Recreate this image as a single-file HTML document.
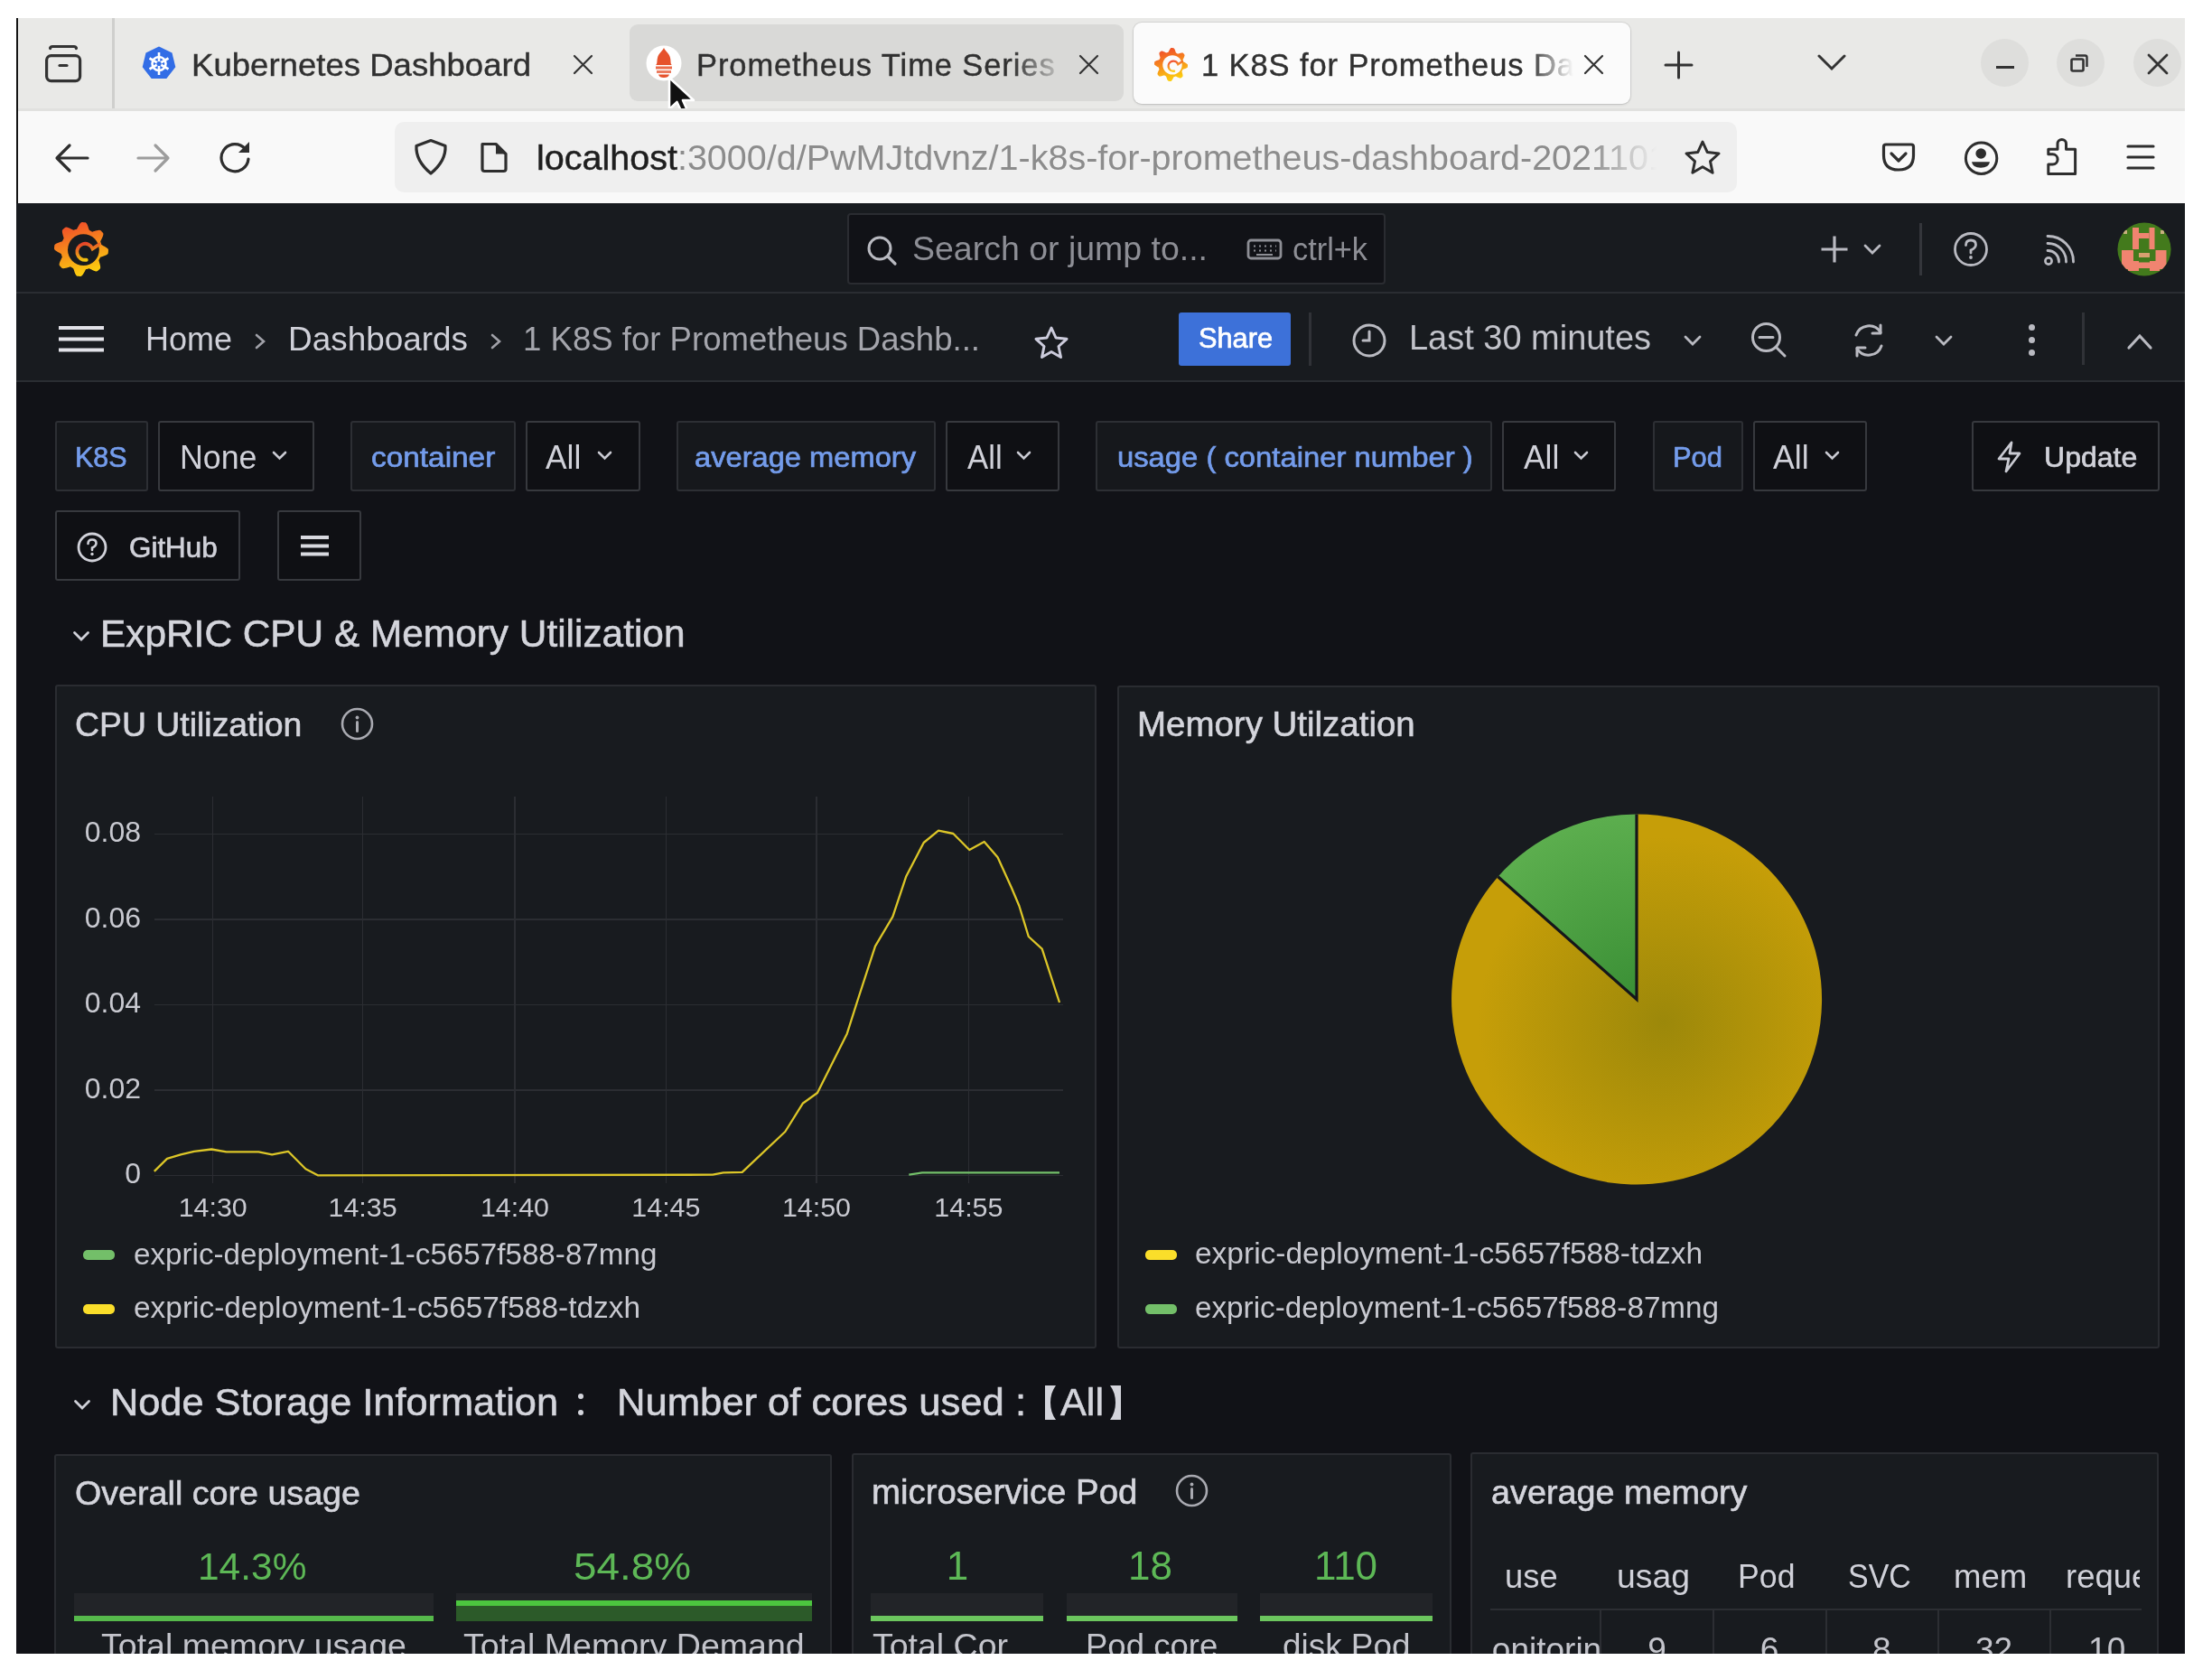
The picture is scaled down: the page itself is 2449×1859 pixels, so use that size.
<!DOCTYPE html><html><head><meta charset="utf-8">
<style>
*{box-sizing:border-box;margin:0;padding:0}
html,body{width:2449px;height:1859px;overflow:hidden;background:#fff;font-family:"Liberation Sans",sans-serif}
.a{position:absolute}
.t{position:absolute;white-space:nowrap;line-height:1;transform-origin:0 0}
#win{position:absolute;left:18px;top:20px;width:2401px;height:1811px;overflow:hidden;background:#111217}
#pg{position:absolute;left:-18px;top:-20px;width:2449px;height:1859px;filter:blur(0.6px)}
svg{position:absolute;overflow:visible}
</style></head><body>
<div id="win"><div id="pg">
<div class="a" style="left:0px;top:0px;width:2449px;height:125px;background:#e9e9e7;"></div>
<svg style="left:48px;top:48px" width="44" height="44" viewBox="0 0 44 44"><g fill="none" stroke="#333" stroke-width="3.2" stroke-linecap="round"><path d="M7.5 5.5 Q8 3.5 10 3.5 H34 Q36 3.5 36.5 5.5"></path><rect x="3.6" y="13.6" width="37" height="28" rx="5"></rect><path d="M18 24.5 H26"></path></g></svg>
<div class="a" style="left:124px;top:20px;width:3px;height:105px;background:#cfcfcd;"></div>
<svg style="left:156px;top:50px" width="40" height="40" viewBox="0 0 40 40"><polygon points="20,1.5 34.5,8.6 38.3,24.3 28.3,36.9 11.7,36.9 1.7,24.3 5.5,8.6" fill="#326de6"></polygon><g stroke="#fff" stroke-width="2.6" fill="none"><circle cx="20" cy="20.5" r="7.5"></circle><path d="M20 8V33 M9.5 14.5 30.5 26.5 M9.5 26.5 30.5 14.5"></path></g><circle cx="20" cy="20.5" r="2.6" fill="#326de6"></circle></svg>
<div class="t" style="left: 211.5px; top: 55.3px; font-size: 34.5px; color: rgb(48, 48, 48); font-weight: 400; -webkit-text-stroke: 0.4px rgb(48, 48, 48); transform: scaleX(1.0597);">Kubernetes Dashboard</div>
<svg style="left:636.0px;top:62.0px" width="19" height="19" viewBox="0 0 19 19"><path d="M0 0L19 19M19 0L0 19" stroke="#333" stroke-width="2.2" stroke-linecap="round"></path></svg>
<div class="a" style="left:697px;top:27px;width:547px;height:85px;background:#d9d9d7;border-radius:9px"></div>
<svg style="left:715px;top:50px" width="40" height="40" viewBox="0 0 40 40"><circle cx="20" cy="20" r="19.5" fill="#fff"></circle><path d="M20 3 C22 7 26 9 27 14 C28 18 27 21 29 22 H11 C13 21 12 18 13 14 C14 9 18 7 20 3Z" fill="#e6522c"></path><rect x="11" y="23.5" width="18" height="3" fill="#e6522c" opacity=".85"></rect><rect x="12" y="28" width="16" height="3" fill="#e6522c" opacity=".75"></rect><path d="M14 32.5 H26 Q25 36 20 36 Q15 36 14 32.5Z" fill="#e6522c"></path></svg>
<div class="t" style="left:771px;top:55.3px;font-size:34.5px;color:#303030;-webkit-text-stroke:0.4px #303030;letter-spacing:0.9px;width:410px;overflow:hidden;-webkit-mask-image:linear-gradient(90deg,#000 85%,transparent 100%)">Prometheus Time Series</div>
<svg style="left:1195.5px;top:62.0px" width="19" height="19" viewBox="0 0 19 19"><path d="M0 0L19 19M19 0L0 19" stroke="#333" stroke-width="2.2" stroke-linecap="round"></path></svg>
<div class="a" style="left:1255px;top:25px;width:550px;height:90px;background:#fbfbfb;border-radius:9px;box-shadow:0 0 0 1px rgba(0,0,0,.07),0 1px 3px rgba(0,0,0,.12)"></div>
<div class="t" style="left:1330px;top:55.3px;font-size:34.5px;color:#303030;-webkit-text-stroke:0.4px #303030;letter-spacing:0.9px;width:412px;overflow:hidden;-webkit-mask-image:linear-gradient(90deg,#000 88%,transparent 100%)">1 K8S for Prometheus Dashboard</div>
<svg style="left:1755.0px;top:61.5px" width="19" height="19" viewBox="0 0 19 19"><path d="M0 0L19 19M19 0L0 19" stroke="#333" stroke-width="2.2" stroke-linecap="round"></path></svg>
<svg style="left:1843px;top:57px" width="31" height="30" viewBox="0 0 31 30"><path d="M15.5 1V29M1 15H30" stroke="#333" stroke-width="3" stroke-linecap="round"></path></svg>
<svg style="left:2012px;top:59px" width="32" height="20" viewBox="0 0 32 20"><path d="M2 3L16 17L30 3" fill="none" stroke="#333" stroke-width="3" stroke-linecap="round"></path></svg>
<div class="a" style="left:2193.0px;top:43px;width:53px;height:53px;border-radius:50%;background:#dededc"></div>
<div class="a" style="left:2277.0px;top:43px;width:53px;height:53px;border-radius:50%;background:#dededc"></div>
<div class="a" style="left:2361.5px;top:43px;width:53px;height:53px;border-radius:50%;background:#dededc"></div>
<div class="a" style="left:2209.5px;top:73px;width:20.0px;height:3px;background:#333;"></div>
<svg style="left:2292px;top:60px" width="20" height="20" viewBox="0 0 20 20"><rect x="1.5" y="5.5" width="13" height="13" rx="1.5" fill="none" stroke="#333" stroke-width="2.6"></rect><path d="M6 1.5H16.5Q18.5 1.5 18.5 3.5V14" fill="none" stroke="#333" stroke-width="2.4"></path></svg>
<svg style="left:2378.5px;top:60.5px" width="20" height="20" viewBox="0 0 20 20"><path d="M0 0L20 20M20 0L0 20" stroke="#333" stroke-width="2.8" stroke-linecap="round"></path></svg>
<svg style="left:738px;top:84px" width="34" height="44" viewBox="0 0 34 44"><path d="M3 2V37L11.5 29L17.5 42L23.5 39.5L18 27H30Z" fill="#111" stroke="#fff" stroke-width="2.6" stroke-linejoin="round"></path></svg>
<div class="a" style="left:0px;top:123px;width:2449px;height:102px;background:#f9f9f9;"></div>
<div class="a" style="left:0px;top:120px;width:2449px;height:3px;background:#e1e1df;"></div>
<svg style="left:60px;top:158px" width="40" height="34" viewBox="0 0 40 34"><path d="M37 17H4M17 3L3 17L17 31" fill="none" stroke="#2e2e2e" stroke-width="3.2" stroke-linecap="round" stroke-linejoin="round"></path></svg>
<svg style="left:150px;top:158px" width="40" height="34" viewBox="0 0 40 34"><path d="M3 17H36M22 3L36 17L22 31" fill="none" stroke="#9d9d9d" stroke-width="3.2" stroke-linecap="round" stroke-linejoin="round"></path></svg>
<svg style="left:240px;top:154px" width="40" height="40" viewBox="0 0 40 40"><path d="M31.5 11 A15 15 0 1 0 35 22" fill="none" stroke="#2e2e2e" stroke-width="3.2" stroke-linecap="round"></path><path d="M36 3V15H24Z" fill="#2e2e2e"></path></svg>
<div class="a" style="left:437px;top:134.5px;width:1486px;height:78.5px;background:#efefef;border-radius:10px"></div>
<svg style="left:457px;top:153px" width="40" height="42" viewBox="0 0 40 42"><path d="M20 2.5 L36 8.5 Q37 25 20 39 Q3 25 4 8.5 Z" fill="none" stroke="#2e2e2e" stroke-width="3.2" stroke-linejoin="round"></path></svg>
<svg style="left:530px;top:156px" width="34" height="37" viewBox="0 0 34 37"><path d="M4 3.5H19L30 14.5V31Q30 33.5 27.5 33.5H6.5Q4 33.5 4 31Z" fill="none" stroke="#2e2e2e" stroke-width="3.2" stroke-linejoin="round"></path><path d="M19 3.5V14.5H30Z" fill="#2e2e2e"></path></svg>
<div class="t" style="left:594px;top:154.9px;font-size:39.5px;color:#8c8c8c;width:1240px;overflow:hidden;-webkit-mask-image:linear-gradient(90deg,#000 94%,transparent 100%)"><span style="color:#1e1e1e;-webkit-text-stroke:0.5px #1e1e1e">localhost</span>:3000/d/PwMJtdvnz/1-k8s-for-prometheus-dashboard-20211010</div>
<svg style="left:1864px;top:154px" width="42" height="42" viewBox="0 0 42 42"><path d="M21 3L26.3 14.6L39 16L29.5 24.6L32.1 37.2L21 30.8L9.9 37.2L12.5 24.6L3 16L15.7 14.6Z" fill="none" stroke="#2e2e2e" stroke-width="3" stroke-linejoin="round"></path></svg>
<svg style="left:2083px;top:157px" width="38" height="34" viewBox="0 0 38 34"><path d="M5 3H33Q35.5 3 35.5 5.5V15Q35.5 31 19 31Q2.5 31 2.5 15V5.5Q2.5 3 5 3Z" fill="none" stroke="#2e2e2e" stroke-width="3.2"></path><path d="M11 13L19 21L27 13" fill="none" stroke="#2e2e2e" stroke-width="3.2" stroke-linecap="round" stroke-linejoin="round"></path></svg>
<svg style="left:2173px;top:154px" width="42" height="42" viewBox="0 0 42 42"><circle cx="20.6" cy="21.2" r="17.2" fill="none" stroke="#2e2e2e" stroke-width="3"></circle><circle cx="20.2" cy="16" r="5.8" fill="#2e2e2e"></circle><path d="M10 25.2H30Q29 31.7 20 31.7Q11 31.7 10 25.2Z" fill="#2e2e2e"></path></svg>
<svg style="left:2263px;top:152px" width="40" height="44" viewBox="0 0 40 44"><path d="M4.8 40.5H34.6V13.3H24.5V7.2A4.75 4.75 0 0 0 15 7.2V13.3H4.8V18.8H9.5A5.6 5.6 0 0 1 9.5 30H4.8Z" fill="none" stroke="#2e2e2e" stroke-width="3" stroke-linejoin="round"></path></svg>
<svg style="left:2354px;top:159px" width="32" height="30" viewBox="0 0 32 30"><path d="M2 3H30M2 15H30M2 27H30" stroke="#2e2e2e" stroke-width="3.2" stroke-linecap="round"></path></svg>
<svg style="left:1278px;top:53px" width="37" height="37" viewBox="0 0 37 37"><defs><linearGradient id="gl1" x1="0.2" y1="0" x2="0.5" y2="1"><stop offset="0" stop-color="#f0462a"></stop><stop offset="1" stop-color="#fcd10e"></stop></linearGradient></defs><path d="M18.50 0.09 L19.08 0.01 L19.66 0.04 L20.24 0.08 L20.82 0.15 L21.39 0.23 L21.91 0.63 L22.35 1.29 L22.72 2.04 L23.05 2.85 L23.32 3.66 L23.57 4.42 L23.80 5.12 L24.08 5.60 L24.49 5.78 L24.88 5.97 L25.27 6.18 L25.66 6.40 L26.07 6.57 L26.73 6.40 L27.46 6.17 L28.25 5.93 L29.09 5.70 L29.93 5.54 L30.75 5.45 L31.51 5.49 L31.99 5.84 L32.38 6.27 L32.75 6.71 L33.12 7.16 L33.47 7.63 L33.55 8.27 L33.39 9.05 L33.12 9.85 L32.78 10.65 L32.41 11.41 L32.04 12.13 L31.71 12.78 L31.57 13.32 L31.73 13.74 L31.87 14.16 L32.00 14.58 L32.12 15.00 L32.29 15.42 L32.87 15.76 L33.55 16.12 L34.29 16.51 L35.03 16.94 L35.75 17.41 L36.39 17.94 L36.91 18.50 L36.99 19.08 L36.96 19.66 L36.92 20.24 L36.85 20.82 L36.77 21.39 L36.37 21.91 L35.71 22.35 L34.96 22.72 L34.15 23.05 L33.34 23.32 L32.58 23.57 L31.88 23.80 L31.40 24.08 L31.22 24.49 L31.03 24.88 L30.82 25.27 L30.60 25.66 L30.43 26.07 L30.60 26.73 L30.83 27.46 L31.07 28.25 L31.30 29.09 L31.46 29.93 L31.55 30.75 L31.51 31.51 L31.16 31.99 L30.73 32.38 L30.29 32.75 L29.84 33.12 L29.37 33.47 L28.73 33.55 L27.95 33.39 L27.15 33.12 L26.35 32.78 L25.59 32.41 L24.87 32.04 L24.22 31.71 L23.68 31.57 L23.26 31.73 L22.84 31.87 L22.42 32.00 L22.00 32.12 L21.58 32.29 L21.24 32.87 L20.88 33.55 L20.49 34.29 L20.06 35.03 L19.59 35.75 L19.06 36.39 L18.50 36.91 L17.92 36.99 L17.34 36.96 L16.76 36.92 L16.18 36.85 L15.61 36.77 L15.09 36.37 L14.65 35.71 L14.28 34.96 L13.95 34.15 L13.68 33.34 L13.43 32.58 L13.20 31.88 L12.92 31.40 L12.51 31.22 L12.12 31.03 L11.73 30.82 L11.34 30.60 L10.93 30.43 L10.27 30.60 L9.54 30.83 L8.75 31.07 L7.91 31.30 L7.07 31.46 L6.25 31.55 L5.49 31.51 L5.01 31.16 L4.62 30.73 L4.25 30.29 L3.88 29.84 L3.53 29.37 L3.45 28.73 L3.61 27.95 L3.88 27.15 L4.22 26.35 L4.59 25.59 L4.96 24.87 L5.29 24.22 L5.43 23.68 L5.27 23.26 L5.13 22.84 L5.00 22.42 L4.88 22.00 L4.71 21.58 L4.13 21.24 L3.45 20.88 L2.71 20.49 L1.97 20.06 L1.25 19.59 L0.61 19.06 L0.09 18.50 L0.01 17.92 L0.04 17.34 L0.08 16.76 L0.15 16.18 L0.23 15.61 L0.63 15.09 L1.29 14.65 L2.04 14.28 L2.85 13.95 L3.66 13.68 L4.42 13.43 L5.12 13.20 L5.60 12.92 L5.78 12.51 L5.97 12.12 L6.18 11.73 L6.40 11.34 L6.57 10.93 L6.40 10.27 L6.17 9.54 L5.93 8.75 L5.70 7.91 L5.54 7.07 L5.45 6.25 L5.49 5.49 L5.84 5.01 L6.27 4.62 L6.71 4.25 L7.16 3.88 L7.63 3.53 L8.27 3.45 L9.05 3.61 L9.85 3.88 L10.65 4.22 L11.41 4.59 L12.13 4.96 L12.78 5.29 L13.32 5.43 L13.74 5.27 L14.16 5.13 L14.58 5.00 L15.00 4.88 L15.42 4.71 L15.76 4.13 L16.12 3.45 L16.51 2.71 L16.94 1.97 L17.41 1.25 L17.94 0.61Z" fill="url(#gl1)"></path><circle cx="19.98" cy="18.87" r="10.73" fill="#fbfbfb"></circle><path d="M22.02 25.71 A5.55 5.55 0 1 1 26.27 18.13 L30.71 15.17" fill="none" stroke="url(#gl1)" stroke-width="2.41" stroke-linecap="round" opacity="0.95"></path></svg>
<div class="a" style="left:18px;top:20px;width:2px;height:205px;background:#141414;"></div>
<div class="a" style="left:0px;top:225px;width:2449px;height:99px;background:#181b1f;"></div>
<div class="a" style="left:0px;top:322.5px;width:2449px;height:2.0px;background:#2a2d32;"></div>
<svg style="left:60px;top:246px" width="60" height="60" viewBox="0 0 60 60"><defs><linearGradient id="gl2" x1="0.2" y1="0" x2="0.5" y2="1"><stop offset="0" stop-color="#f0462a"></stop><stop offset="1" stop-color="#fcd10e"></stop></linearGradient></defs><path d="M30.00 0.15 L30.94 0.01 L31.88 0.06 L32.82 0.13 L33.76 0.24 L34.69 0.37 L35.53 1.02 L36.24 2.09 L36.85 3.32 L37.37 4.62 L37.82 5.93 L38.22 7.17 L38.59 8.30 L39.05 9.08 L39.71 9.37 L40.35 9.69 L40.98 10.02 L41.61 10.38 L42.28 10.65 L43.34 10.37 L44.53 10.01 L45.82 9.61 L47.17 9.25 L48.53 8.98 L49.87 8.85 L51.11 8.89 L51.87 9.46 L52.50 10.16 L53.12 10.88 L53.70 11.61 L54.27 12.37 L54.40 13.42 L54.14 14.68 L53.71 15.98 L53.16 17.27 L52.55 18.51 L51.95 19.67 L51.42 20.73 L51.20 21.61 L51.45 22.28 L51.68 22.95 L51.89 23.64 L52.08 24.33 L52.36 25.00 L53.31 25.55 L54.41 26.13 L55.60 26.77 L56.81 27.47 L57.97 28.24 L59.01 29.09 L59.85 30.00 L59.99 30.94 L59.94 31.88 L59.87 32.82 L59.76 33.76 L59.63 34.69 L58.98 35.53 L57.91 36.24 L56.68 36.85 L55.38 37.37 L54.07 37.82 L52.83 38.22 L51.70 38.59 L50.92 39.05 L50.63 39.71 L50.31 40.35 L49.98 40.98 L49.62 41.61 L49.35 42.28 L49.63 43.34 L49.99 44.53 L50.39 45.82 L50.75 47.17 L51.02 48.53 L51.15 49.87 L51.11 51.11 L50.54 51.87 L49.84 52.50 L49.12 53.12 L48.39 53.70 L47.63 54.27 L46.58 54.40 L45.32 54.14 L44.02 53.71 L42.73 53.16 L41.49 52.55 L40.33 51.95 L39.27 51.42 L38.39 51.20 L37.72 51.45 L37.05 51.68 L36.36 51.89 L35.67 52.08 L35.00 52.36 L34.45 53.31 L33.87 54.41 L33.23 55.60 L32.53 56.81 L31.76 57.97 L30.91 59.01 L30.00 59.85 L29.06 59.99 L28.12 59.94 L27.18 59.87 L26.24 59.76 L25.31 59.63 L24.47 58.98 L23.76 57.91 L23.15 56.68 L22.63 55.38 L22.18 54.07 L21.78 52.83 L21.41 51.70 L20.95 50.92 L20.29 50.63 L19.65 50.31 L19.02 49.98 L18.39 49.62 L17.72 49.35 L16.66 49.63 L15.47 49.99 L14.18 50.39 L12.83 50.75 L11.47 51.02 L10.13 51.15 L8.89 51.11 L8.13 50.54 L7.50 49.84 L6.88 49.12 L6.30 48.39 L5.73 47.63 L5.60 46.58 L5.86 45.32 L6.29 44.02 L6.84 42.73 L7.45 41.49 L8.05 40.33 L8.58 39.27 L8.80 38.39 L8.55 37.72 L8.32 37.05 L8.11 36.36 L7.92 35.67 L7.64 35.00 L6.69 34.45 L5.59 33.87 L4.40 33.23 L3.19 32.53 L2.03 31.76 L0.99 30.91 L0.15 30.00 L0.01 29.06 L0.06 28.12 L0.13 27.18 L0.24 26.24 L0.37 25.31 L1.02 24.47 L2.09 23.76 L3.32 23.15 L4.62 22.63 L5.93 22.18 L7.17 21.78 L8.30 21.41 L9.08 20.95 L9.37 20.29 L9.69 19.65 L10.02 19.02 L10.38 18.39 L10.65 17.72 L10.37 16.66 L10.01 15.47 L9.61 14.18 L9.25 12.83 L8.98 11.47 L8.85 10.13 L8.89 8.89 L9.46 8.13 L10.16 7.50 L10.88 6.88 L11.61 6.30 L12.37 5.73 L13.42 5.60 L14.68 5.86 L15.98 6.29 L17.27 6.84 L18.51 7.45 L19.67 8.05 L20.73 8.58 L21.61 8.80 L22.28 8.55 L22.95 8.32 L23.64 8.11 L24.33 7.92 L25.00 7.64 L25.55 6.69 L26.13 5.59 L26.77 4.40 L27.47 3.19 L28.24 2.03 L29.09 0.99Z" fill="url(#gl2)"></path><circle cx="32.40" cy="30.60" r="17.40" fill="#181b1f"></circle><path d="M35.70 41.70 A9.00 9.00 0 1 1 42.60 29.40 L49.80 24.60" fill="none" stroke="url(#gl2)" stroke-width="3.90" stroke-linecap="round" opacity="0.95"></path></svg>
<div class="a" style="left:938px;top:236px;width:596px;height:79px;background:#111217;border:2px solid #2a2c31;border-radius:4px"></div>
<svg style="left:958px;top:259px" width="38" height="38" viewBox="0 0 38 38"><circle cx="16" cy="16" r="12" fill="none" stroke="#b9bac1" stroke-width="3"></circle><path d="M25 25L33 33" stroke="#b9bac1" stroke-width="3.2" stroke-linecap="round"></path></svg>
<div class="t" style="left: 1010px; top: 256.76px; font-size: 37.5px; color: rgb(141, 142, 149); font-weight: 400; transform: scaleX(0.9993);">Search or jump to...</div>
<svg style="left:1380px;top:264px" width="40" height="24" viewBox="0 0 40 24"><rect x="2" y="2" width="36" height="20" rx="3" fill="none" stroke="#8d8e95" stroke-width="2.8"></rect><path d="M8 8.5H10M14 8.5H16M20 8.5H22M26 8.5H28M32 8.5H33M8 13.5H10M14 13.5H16M20 13.5H22M26 13.5H28M32 13.5H33M11 18H29" stroke="#8d8e95" stroke-width="2.2"></path></svg>
<div class="t" style="left: 1431px; top: 258.97px; font-size: 34.3px; color: rgb(141, 142, 149); font-weight: 400; transform: scaleX(1.0011);">ctrl+k</div>
<svg style="left:2015px;top:260px" width="32" height="32" viewBox="0 0 32 32"><path d="M16 1.5V30.5M1.5 16H30.5" stroke="#b9bac1" stroke-width="3.2"></path></svg>
<svg style="left:2063px;top:270px" width="20" height="12" viewBox="0 0 20 12"><path d="M2 2L10 10L18 2" fill="none" stroke="#b9bac1" stroke-width="2.8" stroke-linecap="round"></path></svg>
<div class="a" style="left:2124.5px;top:247px;width:3.0px;height:58px;background:#34363b;"></div>
<svg style="left:2162px;top:256px" width="40" height="40" viewBox="0 0 40 40"><circle cx="20" cy="20" r="17.5" fill="none" stroke="#b9bac1" stroke-width="2.8"></circle><path d="M14.5 15.5Q14.5 10 20 10Q25.5 10 25.5 15Q25.5 18.5 20 21V24" fill="none" stroke="#b9bac1" stroke-width="2.8" stroke-linecap="round"></path><circle cx="20" cy="29" r="1.9" fill="#b9bac1"></circle></svg>
<svg style="left:2262px;top:260px" width="38" height="38" viewBox="0 0 38 38"><circle cx="6" cy="29" r="3.6" fill="none" stroke="#b9bac1" stroke-width="2.6"></circle><path d="M5 17.5A12 12 0 0 1 17.5 30M5 9.5A20 20 0 0 1 25.5 30M5 1.5A28 28 0 0 1 33.5 30" fill="none" stroke="#b9bac1" stroke-width="2.8" stroke-linecap="round"></path></svg>
<svg style="left:2344px;top:246px" width="60" height="60" viewBox="0 0 60 60"><defs><clipPath id="av"><circle cx="30" cy="30" r="29.6"></circle></clipPath></defs><g clip-path="url(#av)"><rect width="60" height="60" fill="#437a1c"></rect><g fill="#f08470"><rect x="17" y="6" width="7" height="24"></rect><rect x="35.5" y="6" width="6" height="24"></rect><rect x="24" y="12" width="11.5" height="6"></rect><rect x="5" y="31" width="13" height="21"></rect><rect x="42.5" y="31" width="12" height="21"></rect><rect x="12" y="43" width="12" height="11"></rect><rect x="36" y="43" width="11" height="11"></rect><rect x="24" y="34" width="12" height="5" fill="#d9a070"></rect><rect x="24" y="44.5" width="12" height="6.5"></rect></g><rect x="7" y="9" width="4" height="4" fill="#c8b080"></rect><rect x="48" y="9" width="4" height="4" fill="#c8b080"></rect></g></svg>
<div class="a" style="left:0px;top:324.5px;width:2449px;height:97.5px;background:#181b1f;"></div>
<div class="a" style="left:0px;top:421px;width:2449px;height:2px;background:#2a2d32;"></div>
<svg style="left:64px;top:361px" width="52" height="30" viewBox="0 0 52 30"><path d="M1 2H51M1 14.5H51M1 26.5H51" stroke="#e2e2e8" stroke-width="3.8"></path></svg>
<div class="t" style="left: 161px; top: 356.68px; font-size: 37px; color: rgb(207, 208, 216); font-weight: 400; transform: scaleX(0.9726);">Home</div>
<svg style="left:281px;top:368px" width="14" height="20" viewBox="0 0 14 20"><path d="M3 3L11 10L3 17" fill="none" stroke="#a0a1a8" stroke-width="2.6" stroke-linecap="round"></path></svg>
<div class="t" style="left: 319px; top: 356.68px; font-size: 37px; color: rgb(207, 208, 216); font-weight: 400; transform: scaleX(0.9974);">Dashboards</div>
<svg style="left:542px;top:368px" width="14" height="20" viewBox="0 0 14 20"><path d="M3 3L11 10L3 17" fill="none" stroke="#a0a1a8" stroke-width="2.6" stroke-linecap="round"></path></svg>
<div class="t" style="left: 579px; top: 356.68px; font-size: 37px; color: rgb(164, 165, 172); font-weight: 400; transform: scaleX(0.9881);">1 K8S for Prometheus Dashb...</div>
<svg style="left:1144px;top:360px" width="40" height="40" viewBox="0 0 40 40"><path d="M20 3L25 14L37 15.3L28 23.5L30.5 35.5L20 29.5L9.5 35.5L12 23.5L3 15.3L15 14Z" fill="none" stroke="#ccccdc" stroke-width="3" stroke-linejoin="round"></path></svg>
<div class="a" style="left:1305px;top:346px;width:124px;height:59px;background:#3d71d9;border-radius:3px"></div>
<div class="t" style="left: 1327px; top: 359.51px; font-size: 30.7px; color: rgb(255, 255, 255); font-weight: 400; -webkit-text-stroke-width: 0.7px; transform: scaleX(1.0013);">Share</div>
<div class="a" style="left:1448.5px;top:346px;width:3.0px;height:59px;background:#303237;"></div>
<svg style="left:1496px;top:357px" width="40" height="40" viewBox="0 0 40 40"><circle cx="20" cy="20" r="17" fill="none" stroke="#b9bac1" stroke-width="3"></circle><path d="M20 10V20H13" fill="none" stroke="#b9bac1" stroke-width="3" stroke-linecap="round"></path></svg>
<div class="t" style="left: 1560px; top: 354.83px; font-size: 38px; color: rgb(194, 195, 202); font-weight: 400; transform: scaleX(0.999);">Last 30 minutes</div>
<svg style="left:1864px;top:371px" width="20" height="13" viewBox="0 0 20 13"><path d="M2 2L10 10L18 2" fill="none" stroke="#b9bac1" stroke-width="2.8" stroke-linecap="round"></path></svg>
<svg style="left:1938px;top:356px" width="42" height="42" viewBox="0 0 42 42"><circle cx="17.5" cy="17.5" r="15" fill="none" stroke="#b9bac1" stroke-width="3"></circle><path d="M10 17.5H25M28.5 28.5L38 38" fill="none" stroke="#b9bac1" stroke-width="3" stroke-linecap="round"></path></svg>
<svg style="left:2048px;top:356px" width="42" height="42" viewBox="0 0 42 42"><path d="M7 15A15 15 0 0 1 34 12M35 27A15 15 0 0 1 8 30" fill="none" stroke="#b9bac1" stroke-width="3" stroke-linecap="round"></path><path d="M34 4V13H25M8 38V29H17" fill="none" stroke="#b9bac1" stroke-width="3" stroke-linecap="round" stroke-linejoin="round"></path></svg>
<svg style="left:2142px;top:371px" width="20" height="13" viewBox="0 0 20 13"><path d="M2 2L10 10L18 2" fill="none" stroke="#b9bac1" stroke-width="2.8" stroke-linecap="round"></path></svg>
<div class="a" style="left:2245.5px;top:358.5px;width:7px;height:7px;border-radius:50%;background:#b9bac1"></div>
<div class="a" style="left:2245.5px;top:372.5px;width:7px;height:7px;border-radius:50%;background:#b9bac1"></div>
<div class="a" style="left:2245.5px;top:386.5px;width:7px;height:7px;border-radius:50%;background:#b9bac1"></div>
<div class="a" style="left:2304.5px;top:346px;width:3.0px;height:58px;background:#303237;"></div>
<svg style="left:2355px;top:368px" width="28" height="20" viewBox="0 0 28 20"><path d="M2 17L14 4L26 17" fill="none" stroke="#b9bac1" stroke-width="3.2" stroke-linecap="round"></path></svg>
<div class="a" style="left:60.5px;top:465.5px;width:103.0px;height:78.0px;background:#16181c;border:2px solid #2d2f34;border-radius:3px"></div>
<div class="t" style="left: 82.8px; top: 490.76px; font-size: 31px; color: rgb(116, 156, 235); font-weight: 400; -webkit-text-stroke-width: 0.7px; transform: scaleX(0.9828);">K8S</div>
<div class="a" style="left:174.5px;top:465.5px;width:173.0px;height:78.0px;background:#0f1014;border:2px solid #37393e;border-radius:3px"></div>
<div class="t" style="left: 198.5px; top: 488.93px; font-size: 36px; color: rgb(208, 209, 217); font-weight: 400; transform: scaleX(0.9935);">None</div>
<svg style="left:300.5px;top:499px" width="17" height="11" viewBox="0 0 17 11"><path d="M2 2L8.5 8.5L15 2" fill="none" stroke="#c9cad2" stroke-width="2.6" stroke-linecap="round"></path></svg>
<div class="a" style="left:388px;top:465.5px;width:183px;height:78.0px;background:#16181c;border:2px solid #2d2f34;border-radius:3px"></div>
<div class="t" style="left: 410.7px; top: 490.76px; font-size: 31px; color: rgb(116, 156, 235); font-weight: 400; -webkit-text-stroke-width: 0.7px; transform: scaleX(1.0766);">container</div>
<div class="a" style="left:582px;top:465.5px;width:126.5px;height:78.0px;background:#0f1014;border:2px solid #37393e;border-radius:3px"></div>
<div class="t" style="left: 604px; top: 488.93px; font-size: 36px; color: rgb(208, 209, 217); font-weight: 400; transform: scaleX(0.9821);">All</div>
<svg style="left:660.5px;top:499px" width="17" height="11" viewBox="0 0 17 11"><path d="M2 2L8.5 8.5L15 2" fill="none" stroke="#c9cad2" stroke-width="2.6" stroke-linecap="round"></path></svg>
<div class="a" style="left:749px;top:465.5px;width:287px;height:78.0px;background:#16181c;border:2px solid #2d2f34;border-radius:3px"></div>
<div class="t" style="left: 769px; top: 490.76px; font-size: 31px; color: rgb(116, 156, 235); font-weight: 400; -webkit-text-stroke-width: 0.7px; transform: scaleX(1.0533);">average memory</div>
<div class="a" style="left:1046.5px;top:465.5px;width:126.5px;height:78.0px;background:#0f1014;border:2px solid #37393e;border-radius:3px"></div>
<div class="t" style="left: 1071px; top: 488.93px; font-size: 36px; color: rgb(208, 209, 217); font-weight: 400; transform: scaleX(0.9646);">All</div>
<svg style="left:1125px;top:499px" width="17" height="11" viewBox="0 0 17 11"><path d="M2 2L8.5 8.5L15 2" fill="none" stroke="#c9cad2" stroke-width="2.6" stroke-linecap="round"></path></svg>
<div class="a" style="left:1213px;top:465.5px;width:439px;height:78.0px;background:#16181c;border:2px solid #2d2f34;border-radius:3px"></div>
<div class="t" style="left: 1236.7px; top: 490.76px; font-size: 31px; color: rgb(116, 156, 235); font-weight: 400; -webkit-text-stroke-width: 0.7px; transform: scaleX(1.0575);">usage ( container number )</div>
<div class="a" style="left:1663px;top:465.5px;width:126px;height:78.0px;background:#0f1014;border:2px solid #37393e;border-radius:3px"></div>
<div class="t" style="left: 1686.7px; top: 488.93px; font-size: 36px; color: rgb(208, 209, 217); font-weight: 400; transform: scaleX(0.9821);">All</div>
<svg style="left:1742px;top:499px" width="17" height="11" viewBox="0 0 17 11"><path d="M2 2L8.5 8.5L15 2" fill="none" stroke="#c9cad2" stroke-width="2.6" stroke-linecap="round"></path></svg>
<div class="a" style="left:1829.5px;top:465.5px;width:100.5px;height:78.0px;background:#16181c;border:2px solid #2d2f34;border-radius:3px"></div>
<div class="t" style="left: 1852px; top: 490.76px; font-size: 31px; color: rgb(116, 156, 235); font-weight: 400; -webkit-text-stroke-width: 0.7px; transform: scaleX(0.9969);">Pod</div>
<div class="a" style="left:1941px;top:465.5px;width:126px;height:78.0px;background:#0f1014;border:2px solid #37393e;border-radius:3px"></div>
<div class="t" style="left: 1963.4px; top: 488.93px; font-size: 36px; color: rgb(208, 209, 217); font-weight: 400; transform: scaleX(0.9896);">All</div>
<svg style="left:2020px;top:499px" width="17" height="11" viewBox="0 0 17 11"><path d="M2 2L8.5 8.5L15 2" fill="none" stroke="#c9cad2" stroke-width="2.6" stroke-linecap="round"></path></svg>
<div class="a" style="left:2182.5px;top:465.5px;width:208.0px;height:78.0px;background:#0f1014;border:2px solid #37393e;border-radius:3px"></div>
<svg style="left:2208px;top:488px" width="34" height="36" viewBox="0 0 34 36"><path d="M19 2L5 20H16L13 34L28 14H17Z" fill="none" stroke="#c9cad2" stroke-width="2.8" stroke-linejoin="round"></path></svg>
<div class="t" style="left: 2262.7px; top: 490.41px; font-size: 32px; color: rgb(208, 209, 217); font-weight: 400; -webkit-text-stroke-width: 0.7px; transform: scaleX(1.0011);">Update</div>
<div class="a" style="left:60.5px;top:565px;width:205.5px;height:78px;background:#0f1014;border:2px solid #37393e;border-radius:3px"></div>
<svg style="left:84px;top:588px" width="36" height="36" viewBox="0 0 36 36"><circle cx="18" cy="18" r="15" fill="none" stroke="#d0d1d9" stroke-width="2.8"></circle><path d="M13.5 14Q13.5 9.5 18 9.5Q22.5 9.5 22.5 13.5Q22.5 16.5 18 18.5V21" fill="none" stroke="#d0d1d9" stroke-width="2.6" stroke-linecap="round"></path><circle cx="18" cy="25.5" r="1.7" fill="#d0d1d9"></circle></svg>
<div class="t" style="left: 143px; top: 590.62px; font-size: 31.4px; color: rgb(208, 209, 217); font-weight: 400; -webkit-text-stroke-width: 0.7px; transform: scaleX(1);">GitHub</div>
<div class="a" style="left:306.5px;top:565px;width:93.5px;height:78px;background:#0f1014;border:2px solid #37393e;border-radius:3px"></div>
<svg style="left:332px;top:592px" width="33" height="24" viewBox="0 0 33 24"><path d="M1 3H32M1 12.5H32M1 21.5H32" stroke="#d8d9e0" stroke-width="4"></path></svg>
<svg style="left:80px;top:698px" width="20" height="14" viewBox="0 0 20 14"><path d="M2.5 2.5L10 10L17.5 2.5" fill="none" stroke="#d0d1d9" stroke-width="2.8" stroke-linecap="round"></path></svg>
<div class="t" style="left: 110.5px; top: 681.11px; font-size: 42.4px; color: rgb(212, 213, 220); font-weight: 400; -webkit-text-stroke-width: 0.6px; transform: scaleX(0.9995);">ExpRIC CPU &amp; Memory Utilization</div>
<div class="a" style="left:61px;top:758px;width:1153px;height:735px;background:#181b1f;border:2px solid #2a2c31;border-radius:3px"></div>
<div class="t" style="left: 83.4px; top: 784.28px; font-size: 37px; color: rgb(212, 213, 220); font-weight: 400; -webkit-text-stroke-width: 0.6px; transform: scaleX(1.0105);">CPU Utilization</div>
<svg style="left:376.5px;top:782.5px" width="37.0" height="37.0" viewBox="0 0 37.0 37.0"><circle cx="18.5" cy="18.5" r="16.5" fill="none" stroke="#a9aab1" stroke-width="2.6"></circle><path d="M18.5 16.5V26.5" stroke="#a9aab1" stroke-width="3" stroke-linecap="round"></path><circle cx="18.5" cy="11.5" r="1.9" fill="#a9aab1"></circle></svg>
<div class="a" style="left:170.8px;top:922.65px;width:1006.7px;height:1.5px;background:#2b2d32;"></div>
<div class="a" style="left:170.8px;top:1017.05px;width:1006.7px;height:1.5px;background:#2b2d32;"></div>
<div class="a" style="left:170.8px;top:1111.75px;width:1006.7px;height:1.5px;background:#2b2d32;"></div>
<div class="a" style="left:170.8px;top:1206.25px;width:1006.7px;height:1.5px;background:#2b2d32;"></div>
<div class="a" style="left:170.8px;top:1300.55px;width:1006.7px;height:1.5px;background:#2b2d32;"></div>
<div class="a" style="left:234.95px;top:882.3px;width:1.5px;height:427.4000000000001px;background:#2b2d32;"></div>
<div class="a" style="left:400.85px;top:882.3px;width:1.5px;height:427.4000000000001px;background:#2b2d32;"></div>
<div class="a" style="left:569.25px;top:882.3px;width:1.5px;height:427.4000000000001px;background:#2b2d32;"></div>
<div class="a" style="left:736.65px;top:882.3px;width:1.5px;height:427.4000000000001px;background:#2b2d32;"></div>
<div class="a" style="left:903.25px;top:882.3px;width:1.5px;height:427.4000000000001px;background:#2b2d32;"></div>
<div class="a" style="left:1071.65px;top:882.3px;width:1.5px;height:427.4000000000001px;background:#2b2d32;"></div>
<div class="t" style="left:60px;width:96px;text-align:right;top:905.31px;font-size:32px;color:#c8c9d0">0.08</div>
<div class="t" style="left:60px;width:96px;text-align:right;top:999.71px;font-size:32px;color:#c8c9d0">0.06</div>
<div class="t" style="left:60px;width:96px;text-align:right;top:1094.41px;font-size:32px;color:#c8c9d0">0.04</div>
<div class="t" style="left:60px;width:96px;text-align:right;top:1188.91px;font-size:32px;color:#c8c9d0">0.02</div>
<div class="t" style="left:60px;width:96px;text-align:right;top:1283.21px;font-size:32px;color:#c8c9d0">0</div>
<div class="t" style="left:175.7px;width:120px;text-align:center;top:1321.27px;font-size:30.4px;color:#c8c9d0">14:30</div>
<div class="t" style="left:341.6px;width:120px;text-align:center;top:1321.27px;font-size:30.4px;color:#c8c9d0">14:35</div>
<div class="t" style="left:510.0px;width:120px;text-align:center;top:1321.27px;font-size:30.4px;color:#c8c9d0">14:40</div>
<div class="t" style="left:677.4px;width:120px;text-align:center;top:1321.27px;font-size:30.4px;color:#c8c9d0">14:45</div>
<div class="t" style="left:844.0px;width:120px;text-align:center;top:1321.27px;font-size:30.4px;color:#c8c9d0">14:50</div>
<div class="t" style="left:1012.4px;width:120px;text-align:center;top:1321.27px;font-size:30.4px;color:#c8c9d0">14:55</div>
<svg style="left:0px;top:0px" width="2449" height="1859" viewBox="0 0 2449 1859"><polyline points="170.8,1296.9 185.0,1282.9 200.0,1278.4 214.9,1274.8 234.2,1272.5 250.6,1275.4 286.3,1275.4 301.2,1278.4 319.0,1274.8 338.4,1294.2 351.8,1301.3 789.0,1300.7 800.8,1298.4 821.7,1297.8 869.3,1253.0 888.7,1221.8 905.0,1210.0 937.8,1144.4 949.7,1107.0 969.0,1047.6 988.4,1014.9 1003.3,970.2 1022.7,933.0 1039.0,919.6 1055.4,923.0 1073.3,941.0 1089.7,932.0 1104.6,949.3 1119.5,982.0 1128.4,1003.0 1138.8,1037.0 1153.7,1050.6 1173.0,1110.0" fill="none" stroke="#dcc628" stroke-width="2.3" stroke-linejoin="round"></polyline><polyline points="1006.3,1300.7 1021.0,1298.4 1173.0,1298.4" fill="none" stroke="#73bf69" stroke-width="2.3"></polyline></svg>
<div class="a" style="left:91.5px;top:1384px;width:35.5px;height:10.5px;background:#73bf69;border-radius:5px"></div>
<div class="t" style="left: 147.6px; top: 1371.6px; font-size: 33.2px; color: rgb(200, 201, 208); font-weight: 400; transform: scaleX(1.0002);">expric-deployment-1-c5657f588-87mng</div>
<div class="a" style="left:91.5px;top:1444px;width:35.5px;height:11px;background:#fade2a;border-radius:5px"></div>
<div class="t" style="left: 147.6px; top: 1431.2px; font-size: 33.2px; color: rgb(200, 201, 208); font-weight: 400; transform: scaleX(1.007);">expric-deployment-1-c5657f588-tdzxh</div>
<div class="a" style="left:1236.5px;top:759px;width:1154.0px;height:734px;background:#181b1f;border:2px solid #2a2c31;border-radius:3px"></div>
<div class="t" style="left: 1259.3px; top: 783.41px; font-size: 38.5px; color: rgb(212, 213, 220); font-weight: 400; -webkit-text-stroke-width: 0.6px; transform: scaleX(0.9988);">Memory Utilzation</div>
<svg style="left:0px;top:0px" width="2449" height="1859" viewBox="0 0 2449 1859"><defs><radialGradient id="py" cx="1842" cy="1131.5" r="205" gradientUnits="userSpaceOnUse"><stop offset="0" stop-color="#9c880a"></stop><stop offset="1" stop-color="#c69e08"></stop></radialGradient><radialGradient id="pgn" cx="1812" cy="1106.5" r="205" gradientUnits="userSpaceOnUse"><stop offset="0" stop-color="#3a8f35"></stop><stop offset="1" stop-color="#5cae4e"></stop></radialGradient></defs><path d="M1812 1106.5L1812 901.5A205 205 0 1 1 1658.5 970.7Z" fill="url(#py)"></path><path d="M1812 1106.5L1658.5 970.7A205 205 0 0 1 1812 901.5Z" fill="url(#pgn)"></path><path d="M1658.5 970.7L1812 1106.5L1812 901.5" fill="none" stroke="#15161a" stroke-width="3.2"></path></svg>
<div class="a" style="left:1267.5px;top:1384px;width:35.5px;height:11px;background:#fade2a;border-radius:5px"></div>
<div class="t" style="left: 1323px; top: 1371.4px; font-size: 33.2px; color: rgb(200, 201, 208); font-weight: 400; transform: scaleX(1.0088);">expric-deployment-1-c5657f588-tdzxh</div>
<div class="a" style="left:1267.5px;top:1443.5px;width:35.5px;height:11.0px;background:#73bf69;border-radius:5px"></div>
<div class="t" style="left: 1323px; top: 1430.9px; font-size: 33.2px; color: rgb(200, 201, 208); font-weight: 400; transform: scaleX(1.0013);">expric-deployment-1-c5657f588-87mng</div>
<svg style="left:81px;top:1549px" width="20" height="14" viewBox="0 0 20 14"><path d="M2.5 2.5L10 10L17.5 2.5" fill="none" stroke="#d0d1d9" stroke-width="2.8" stroke-linecap="round"></path></svg>
<div class="t" style="left: 121.7px; top: 1530.55px; font-size: 42.7px; color: rgb(212, 213, 220); font-weight: 400; -webkit-text-stroke-width: 0.6px; transform: scaleX(1.0147);">Node Storage Information</div>
<div class="a" style="left:640px;top:1543px;width:6px;height:6px;border-radius:50%;background:#d4d5dc"></div><div class="a" style="left:640px;top:1561px;width:6px;height:6px;border-radius:50%;background:#d4d5dc"></div>
<div class="t" style="left: 683.3px; top: 1530.55px; font-size: 42.7px; color: rgb(212, 213, 220); font-weight: 400; -webkit-text-stroke-width: 0.6px; transform: scaleX(1.021);">Number of cores used :</div>
<svg style="left:1154px;top:1533px" width="90" height="40" viewBox="0 0 90 40"><path d="M3 1H15Q9 9 9 20Q9 31 15 39H3Z" fill="#d4d5dc"></path><path d="M87 1H75Q81 9 81 20Q81 31 75 39H87Z" fill="#d4d5dc"></path></svg>
<div class="t" style="left: 1174px; top: 1530.55px; font-size: 42.7px; color: rgb(212, 213, 220); font-weight: 400; -webkit-text-stroke-width: 0.6px; transform: scaleX(1.0115);">All</div>
<div class="a" style="left:60px;top:1609.5px;width:861px;height:290.5px;background:#181b1f;border:2px solid #2a2c31;border-radius:3px"></div>
<div class="t" style="left: 82.8px; top: 1634.87px; font-size: 37.6px; color: rgb(212, 213, 220); font-weight: 400; -webkit-text-stroke-width: 0.6px; transform: scaleX(1.0019);">Overall core usage</div>
<div class="t" style="left: 219px; top: 1713.72px; font-size: 42.5px; color: rgb(93, 184, 86); font-weight: 400; transform: scaleX(0.999);">14.3%</div>
<div class="t" style="left: 634.7px; top: 1713.72px; font-size: 42.5px; color: rgb(93, 184, 86); font-weight: 400; transform: scaleX(1.0787);">54.8%</div>
<div class="a" style="left:82px;top:1763.5px;width:398px;height:31.5px;background:#222428;"></div>
<div class="a" style="left:82px;top:1788.5px;width:398px;height:6.0px;background:#56b94b;"></div>
<div class="a" style="left:505px;top:1763.5px;width:394px;height:31.5px;background:#222428;"></div>
<div class="a" style="left:505px;top:1772px;width:394px;height:23px;background:#2c5a29;"></div>
<div class="a" style="left:505px;top:1772px;width:394px;height:6px;background:#4cc63f;"></div>
<div class="t" style="left: 111.7px; top: 1804.26px; font-size: 37.5px; color: rgb(195, 196, 203); font-weight: 400; transform: scaleX(1.001);">Total memory usage</div>
<div class="t" style="left: 513px; top: 1804.26px; font-size: 37.5px; color: rgb(195, 196, 203); font-weight: 400; transform: scaleX(1.0013);">Total Memory Demand</div>
<div class="a" style="left:943px;top:1609px;width:664px;height:291px;background:#181b1f;border:2px solid #2a2c31;border-radius:3px"></div>
<div class="t" style="left: 965px; top: 1633.08px; font-size: 38.3px; color: rgb(212, 213, 220); font-weight: 400; -webkit-text-stroke-width: 0.6px; transform: scaleX(1.0024);">microservice Pod</div>
<svg style="left:1300.9px;top:1631.5px" width="37.0" height="37.0" viewBox="0 0 37.0 37.0"><circle cx="18.5" cy="18.5" r="16.5" fill="none" stroke="#a9aab1" stroke-width="2.6"></circle><path d="M18.5 16.5V26.5" stroke="#a9aab1" stroke-width="3" stroke-linecap="round"></path><circle cx="18.5" cy="11.5" r="1.9" fill="#a9aab1"></circle></svg>
<div class="t" style="left:960px;width:200px;text-align:center;top:1712.25px;font-size:44px;color:#5db856">1</div>
<div class="a" style="left:964px;top:1764px;width:191px;height:30.5px;background:#222428;"></div>
<div class="a" style="left:964px;top:1789px;width:191px;height:5.5px;background:#6cc65e;"></div>
<div class="t" style="left:1173.4px;width:200px;text-align:center;top:1712.25px;font-size:44px;color:#5db856">18</div>
<div class="a" style="left:1180.5px;top:1764px;width:189.0px;height:30.5px;background:#222428;"></div>
<div class="a" style="left:1180.5px;top:1789px;width:189.0px;height:5.5px;background:#6cc65e;"></div>
<div class="t" style="left:1390px;width:200px;text-align:center;top:1712.25px;font-size:44px;color:#5db856">110</div>
<div class="a" style="left:1394.5px;top:1764px;width:191.5px;height:30.5px;background:#222428;"></div>
<div class="a" style="left:1394.5px;top:1789px;width:191.5px;height:5.5px;background:#6cc65e;"></div>
<div class="t" style="left: 965.8px; top: 1804.26px; font-size: 37.5px; color: rgb(195, 196, 203); font-weight: 400; transform: scaleX(0.9996);">Total Cor</div>
<div class="t" style="left: 1201.8px; top: 1804.26px; font-size: 37.5px; color: rgb(195, 196, 203); font-weight: 400; transform: scaleX(0.9741);">Pod core</div>
<div class="t" style="left: 1420px; top: 1804.26px; font-size: 37.5px; color: rgb(195, 196, 203); font-weight: 400; transform: scaleX(0.9837);">disk Pod</div>
<div class="a" style="left:1628px;top:1608px;width:762px;height:292px;background:#181b1f;border:2px solid #2a2c31;border-radius:3px"></div>
<div class="t" style="left: 1651px; top: 1634.09px; font-size: 37.7px; color: rgb(212, 213, 220); font-weight: 400; -webkit-text-stroke-width: 0.6px; transform: scaleX(1.0022);">average memory</div>
<div class="t" style="left: 1666px; top: 1727.9px; font-size: 36.5px; color: rgb(208, 209, 217); font-weight: 400; transform: scaleX(0.9956);">use</div>
<div class="t" style="left: 1790px; top: 1727.9px; font-size: 36.5px; color: rgb(208, 209, 217); font-weight: 400; transform: scaleX(1.0233);">usag</div>
<div class="t" style="left: 1924px; top: 1727.9px; font-size: 36.5px; color: rgb(208, 209, 217); font-weight: 400; transform: scaleX(0.9776);">Pod</div>
<div class="t" style="left: 2045.5px; top: 1727.9px; font-size: 36.5px; color: rgb(208, 209, 217); font-weight: 400; transform: scaleX(0.9299);">SVC</div>
<div class="t" style="left: 2163px; top: 1727.9px; font-size: 36.5px; color: rgb(208, 209, 217); font-weight: 400; transform: scaleX(1.0024);">mem</div>
<div class="a" style="left:2287px;top:1720px;width:82px;height:60px;overflow:hidden"><div class="t" style="left:0;top:7.90px;font-size:36.5px;color:#d0d1d9">request</div></div>
<div class="a" style="left:1650px;top:1781px;width:721px;height:2px;background:#2c2e33;"></div>
<div class="a" style="left:1771.4px;top:1783px;width:2.0px;height:117px;background:#2c2e33;"></div>
<div class="a" style="left:1896px;top:1783px;width:2px;height:117px;background:#2c2e33;"></div>
<div class="a" style="left:2020.6px;top:1783px;width:2.0px;height:117px;background:#2c2e33;"></div>
<div class="a" style="left:2145px;top:1783px;width:2px;height:117px;background:#2c2e33;"></div>
<div class="a" style="left:2269px;top:1783px;width:2px;height:117px;background:#2c2e33;"></div>
<div class="a" style="left:1651px;top:1790px;width:121px;height:60px;overflow:hidden"><div class="t" style="left:-30px;top:17.68px;font-size:37px;color:#c3c4cb">monitoring</div></div>
<div class="t" style="left:1784.6px;width:100px;text-align:center;top:1807.68px;font-size:37px;color:#c3c4cb">9</div>
<div class="t" style="left:1909px;width:100px;text-align:center;top:1807.68px;font-size:37px;color:#c3c4cb">6</div>
<div class="t" style="left:2033.4px;width:100px;text-align:center;top:1807.68px;font-size:37px;color:#c3c4cb">8</div>
<div class="t" style="left:2157.5px;width:100px;text-align:center;top:1807.68px;font-size:37px;color:#c3c4cb">32</div>
<div class="t" style="left:2282.7px;width:100px;text-align:center;top:1807.68px;font-size:37px;color:#c3c4cb">10</div>
</div></div>
</body></html>
